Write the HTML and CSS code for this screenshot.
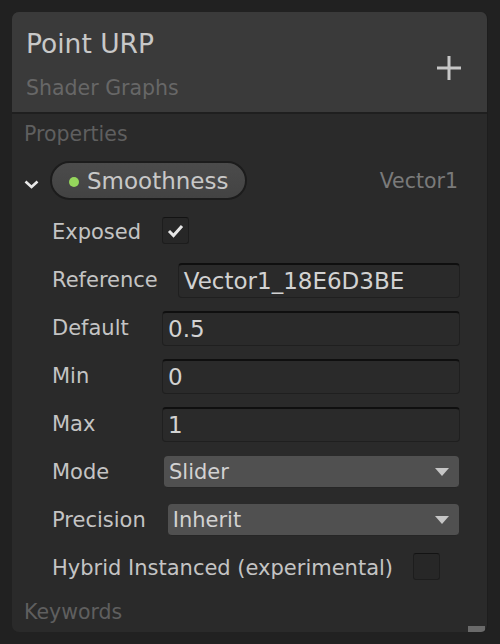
FILE: index.html
```html
<!DOCTYPE html>
<html>
<head>
<meta charset="utf-8">
<link rel="stylesheet" href="styles.css">
</head>
<body>
<div class="panel">
  <div class="header">
    <div class="titles">
      <div class="title">Point URP</div>
      <div class="subtitle">Shader Graphs</div>
    </div>
    <svg class="plus" width="24" height="24" viewBox="0 0 24 24">
      <rect x="10.5" y="0" width="3" height="24" fill="#c6c6c6"/>
      <rect x="0" y="10.5" width="24" height="3" fill="#c6c6c6"/>
    </svg>
  </div>
  <div class="body">
    <div class="section">Properties</div>
    <div class="prop-head">
      <svg class="chevron" width="15" height="9" viewBox="0 0 15 9">
        <polyline points="1.5,1.5 7.5,7 13.5,1.5" fill="none" stroke="#e8e8e8" stroke-width="2.6"/>
      </svg>
      <div class="pill"><span class="dot"></span><span class="pill-text">Smoothness</span></div>
      <div class="type">Vector1</div>
    </div>
    <div class="row">
      <div class="label">Exposed</div>
      <div class="checkbox">
        <svg width="25" height="25" viewBox="0 0 25 25">
          <polyline points="6,13 10.5,17.5 19,8" fill="none" stroke="#e6e6e6" stroke-width="3"/>
        </svg>
      </div>
    </div>
    <div class="row">
      <div class="label">Reference</div>
      <div class="field">Vector1_18E6D3BE</div>
    </div>
    <div class="row">
      <div class="label">Default</div>
      <div class="field">0.5</div>
    </div>
    <div class="row">
      <div class="label">Min</div>
      <div class="field">0</div>
    </div>
    <div class="row">
      <div class="label">Max</div>
      <div class="field">1</div>
    </div>
    <div class="row">
      <div class="label">Mode</div>
      <div class="dropdown"><span>Slider</span><span class="tri"></span></div>
    </div>
    <div class="row">
      <div class="label">Precision</div>
      <div class="dropdown"><span>Inherit</span><span class="tri"></span></div>
    </div>
    <div class="row">
      <div class="label">Hybrid Instanced (experimental)</div>
      <div class="checkbox"></div>
    </div>
    <div class="section keywords">Keywords</div>
  </div>
  <div class="grip"></div>
</div>
</body>
</html>
```
FILE: styles.css
```css
html, body {
  margin: 0;
  padding: 0;
  background: #212121;
}
body {
  padding: 12px;
  font-family: "DejaVu Sans", sans-serif;
}
.panel {
  position: relative;
  width: 476px;
  height: 620px;
  background: #2a2a2a;
  border-radius: 7px;
  overflow: hidden;
  display: flex;
  flex-direction: column;
  box-sizing: border-box;
  border-right: 1px solid #1d1d1d;
}
.header {
  height: 102px;
  flex: none;
  box-sizing: border-box;
  background: #3a3a3a;
  border-bottom: 2px solid #1f1f1f;
  display: flex;
  align-items: center;
  justify-content: space-between;
  padding: 0 26px 0 14px;
}
.titles {
  display: flex;
  flex-direction: column;
  align-self: flex-start;
  padding-top: 17px;
}
.title {
  font-size: 26.5px;
  line-height: 30px;
  color: #c8c8c8;
}
.subtitle {
  margin-top: 17px;
  font-size: 20.5px;
  line-height: 24px;
  color: #676767;
}
.plus {
  display: block;
  margin-top: 12px;
}
.body {
  display: flex;
  flex-direction: column;
  padding-top: 8px;
}
.section {
  font-size: 20.5px;
  line-height: 24px;
  color: #5f5f5f;
  padding-left: 12px;
}
.keywords {
  margin-top: 8px;
}
.prop-head {
  display: flex;
  align-items: flex-start;
  height: 62px;
  flex: none;
  box-sizing: border-box;
  padding: 15px 29px 0 12px;
}
.chevron {
  display: block;
  margin-top: 19px;
  margin-right: 11px;
}
.pill {
  display: flex;
  align-items: center;
  height: 39px;
  box-sizing: border-box;
  border: 2px solid #1c1c1c;
  border-radius: 20px;
  background: linear-gradient(#4b4b4b, #434343);
  padding: 0 17px 0 17px;
}
.dot {
  width: 10px;
  height: 10px;
  border-radius: 50%;
  background: #95d65c;
  margin-right: 8px;
  margin-top: 3px;
}
.pill-text {
  font-size: 23px;
  line-height: 28px;
  color: #c8c8c8;
}
.type {
  margin-left: auto;
  font-size: 20.5px;
  line-height: 24px;
  color: #7a7a7a;
  margin-top: 8px;
}
.row {
  display: flex;
  align-items: center;
  height: 48px;
  flex: none;
  padding: 0 27px 0 40px;
}
.label {
  min-width: 90px;
  margin-right: 20px;
  font-size: 21px;
  line-height: 24px;
  color: #c4c4c4;
  white-space: nowrap;
}
.checkbox {
  width: 27px;
  height: 27px;
  box-sizing: border-box;
  border: 1px solid #1d1d1d;
  border-top-color: #131313;
  border-radius: 3px;
  background: #272727;
  margin-bottom: 4px;
}
.checkbox svg {
  display: block;
}
.field {
  flex: 1;
  height: 35px;
  box-sizing: border-box;
  border: 1px solid #1f1f1f;
  border-top: 2px solid #0f0f0f;
  border-radius: 4px;
  background: #2a2a2a;
  padding-left: 5px;
  font-size: 23px;
  line-height: 32px;
  color: #d2d2d2;
}
.dropdown {
  flex: 1;
  display: flex;
  align-items: center;
  justify-content: space-between;
  height: 32px;
  box-sizing: border-box;
  margin-left: 2px;
  margin-right: 1px;
  border-radius: 4px;
  background: #505050;
  border-bottom: 1px solid #262626;
  padding: 0 10px 0 5px;
  font-size: 21px;
  line-height: 30px;
  color: #d2d2d2;
}
.tri {
  width: 0;
  height: 0;
  border-left: 7px solid transparent;
  border-right: 7px solid transparent;
  border-top: 8px solid #c6c6c6;
}
.grip {
  position: absolute;
  right: 2px;
  bottom: 0;
  width: 17px;
  height: 6px;
  background: #6a6a6a;
}
```
